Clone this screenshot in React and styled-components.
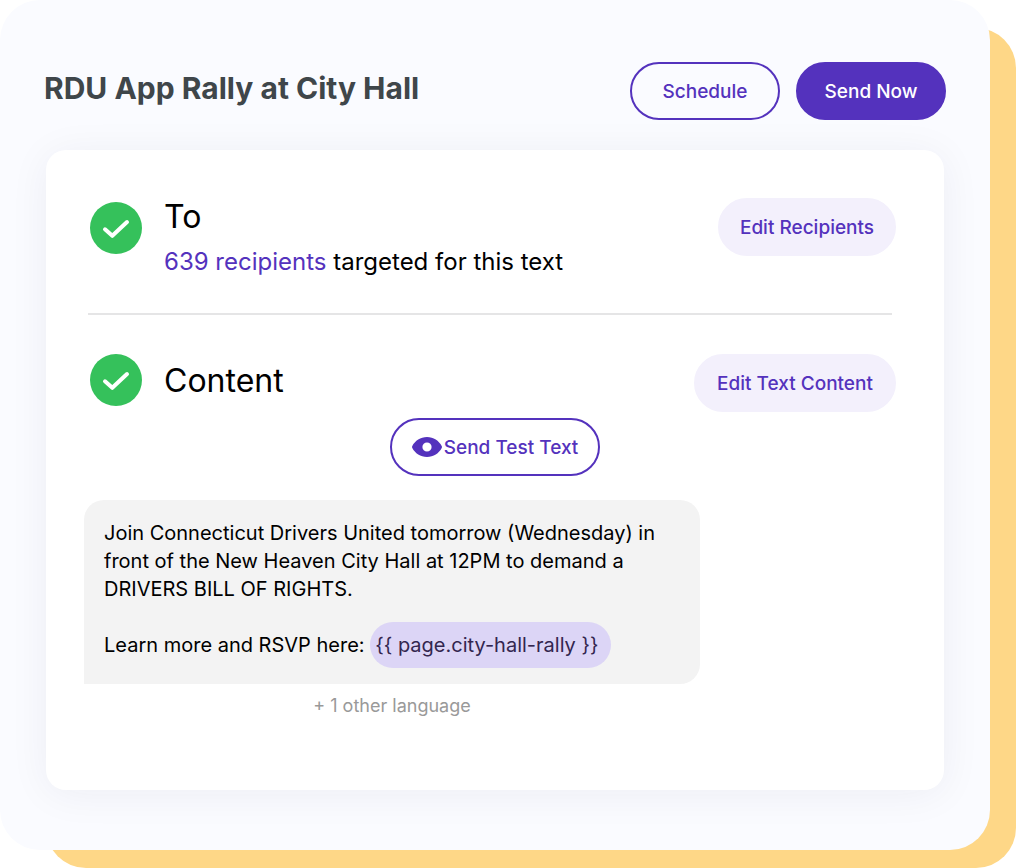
import React from "react";
import styled, { createGlobalStyle } from "styled-components";

const purple = "#5432bd";

const GlobalStyle = createGlobalStyle`
  *, *::before, *::after { box-sizing: border-box; }
  body { margin: 0; background: #ffffff; }
`;

const Stage = styled.div`
  display: grid;
  width: 100%;
  font-family: Inter, "Liberation Sans", sans-serif;
  color: #000000;
`;

const Backdrop = styled.div`
  grid-area: 1 / 1;
  margin: 28px 0 0 46px;
  border-radius: 40px;
  background: #fed787;
`;

const Panel = styled.main`
  grid-area: 1 / 1;
  z-index: 1;
  min-width: 0;
  margin: 0 26px 18px 0;
  padding: 62px 44px 60px;
  border-radius: 40px;
  background: #fafbff;
`;

const Header = styled.header`
  display: flex;
  align-items: center;
  gap: 16px;
  margin-bottom: 30px;
`;

const Title = styled.h1`
  flex: 1;
  margin: 0;
  padding-bottom: 6px;
  font-size: 30px;
  line-height: 40px;
  font-weight: 700;
  color: #3f464a;
`;

const variants = {
  outline: `background: transparent; border-color: ${purple}; color: ${purple};`,
  solid: `background: ${purple}; border-color: ${purple}; color: #ffffff;`,
  soft: `background: #f3f0fc; border-color: #f3f0fc; color: ${purple};`,
};

const Button = styled.button`
  display: inline-flex;
  align-items: center;
  justify-content: center;
  gap: 2px;
  flex-shrink: 0;
  min-width: ${(p) => p.$width};
  height: 58px;
  padding: 0 16px;
  border: 2px solid;
  border-radius: 29px;
  font: inherit;
  font-size: 19px;
  line-height: 28px;
  font-weight: 500;
  white-space: nowrap;
  cursor: pointer;
  ${(p) => variants[p.$variant]}
`;

const Label = styled.span`
  padding-top: 2px;
`;

const Card = styled.section`
  margin: 0 2px;
  padding: 48px 48px 70px 38px;
  border-radius: 20px;
  background: #ffffff;
  box-shadow: 0 4px 40px rgba(40, 40, 60, 0.06);
`;

const Step = styled.div`
  display: flex;
  align-items: flex-start;
  gap: 22px;
  padding-left: 6px;
`;

const StepText = styled.div`
  flex: 1;
  min-width: 0;
`;

const StepTitle = styled.h2`
  margin: 0;
  font-size: 32px;
  line-height: 38px;
  font-weight: 400;
`;

const Summary = styled.p`
  margin: 12px 0 0;
  font-size: 24px;
  line-height: 28px;
`;

const Highlight = styled.a`
  color: ${purple};
  text-decoration: none;
`;

const Badge = styled.svg`
  flex-shrink: 0;
  width: 52px;
  height: 52px;
  margin-top: ${(p) => p.$top};
`;

const Divider = styled.hr`
  height: 2px;
  margin: 37px 4px 39px;
  border: 0;
  background: #e5e5e6;
`;

const ContentTitle = styled(StepTitle)`
  padding-top: 8px;
`;

const Center = styled.div`
  display: flex;
  justify-content: center;
  margin: 6px 0 24px;
  padding-left: 10px;
`;

const Message = styled.div`
  max-width: 616px;
`;

const Bubble = styled.div`
  padding: 19px 20px 25px;
  border-radius: 20px 20px 20px 0;
  background: #f3f3f3;
  font-size: 20px;
  line-height: 28px;
`;

const Paragraph = styled.p`
  margin: 0;
  & + & { margin-top: 28px; }
`;

const Token = styled.span`
  padding: 11px 12px 11px 5px;
  border-radius: 23px;
  background: #dcd5f6;
  color: #33264f;
  white-space: nowrap;
`;

const Note = styled.p`
  margin: 8px 0 0;
  font-size: 18px;
  line-height: 28px;
  text-align: center;
  color: #999999;
`;

function Check({ top }) {
  return (
    <Badge $top={top} viewBox="0 0 52 52" aria-hidden="true">
      <circle cx="26" cy="26" r="26" fill="#35c15b" />
      <path d="M15 27.3 L22.3 33.800 L37 20" fill="none" stroke="#fff" strokeWidth="4" strokeLinecap="round" strokeLinejoin="round" />
    </Badge>
  );
}

function Eye() {
  return (
    <svg width="30" height="20" viewBox="0 0 30 20" aria-hidden="true">
      <path
        fillRule="evenodd"
        fill={purple}
        d="M15 0C8.500 0 3 3.800 .3 9Q-.2 10 .3 11C3 16.200 8.500 20 15 20S27 16.200 29.700 11Q30.200 10 29.700 9C27 3.800 21.500 0 15 0ZM15 5.400A4.600 4.600 0 1 1 15 14.600A4.600 4.600 0 1 1 15 5.400Z"
      />
    </svg>
  );
}

export default function App() {
  return (
    <Stage>
      <GlobalStyle />
      <Backdrop />
      <Panel>
        <Header>
          <Title>RDU App Rally at City Hall</Title>
          <Button type="button" $variant="outline" $width="150px"><Label>Schedule</Label></Button>
          <Button type="button" $variant="solid" $width="150px"><Label>Send Now</Label></Button>
        </Header>
        <Card>
          <Step>
            <Check top="4px" />
            <StepText>
              <StepTitle>To</StepTitle>
              <Summary>
                <Highlight href="#recipients">639 recipients</Highlight> targeted for this text
              </Summary>
            </StepText>
            <Button type="button" $variant="soft" $width="178px"><Label>Edit Recipients</Label></Button>
          </Step>
          <Divider />
          <Step>
            <Check top="0" />
            <StepText>
              <ContentTitle>Content</ContentTitle>
            </StepText>
            <Button type="button" $variant="soft" $width="202px"><Label>Edit Text Content</Label></Button>
          </Step>
          <Center>
            <Button type="button" $variant="outline" $width="210px">
              <Eye />
              <Label>Send Test Text</Label>
            </Button>
          </Center>
          <Message>
            <Bubble>
              <Paragraph>
                Join Connecticut Drivers United tomorrow (Wednesday) in front of the New Heaven City
                Hall at 12PM to demand a DRIVERS BILL OF RIGHTS.
              </Paragraph>
              <Paragraph>
                Learn more and RSVP here: <Token>{"{{ page.city-hall-rally }}"}</Token>
              </Paragraph>
            </Bubble>
            <Note>+ 1 other language</Note>
          </Message>
        </Card>
      </Panel>
    </Stage>
  );
}
